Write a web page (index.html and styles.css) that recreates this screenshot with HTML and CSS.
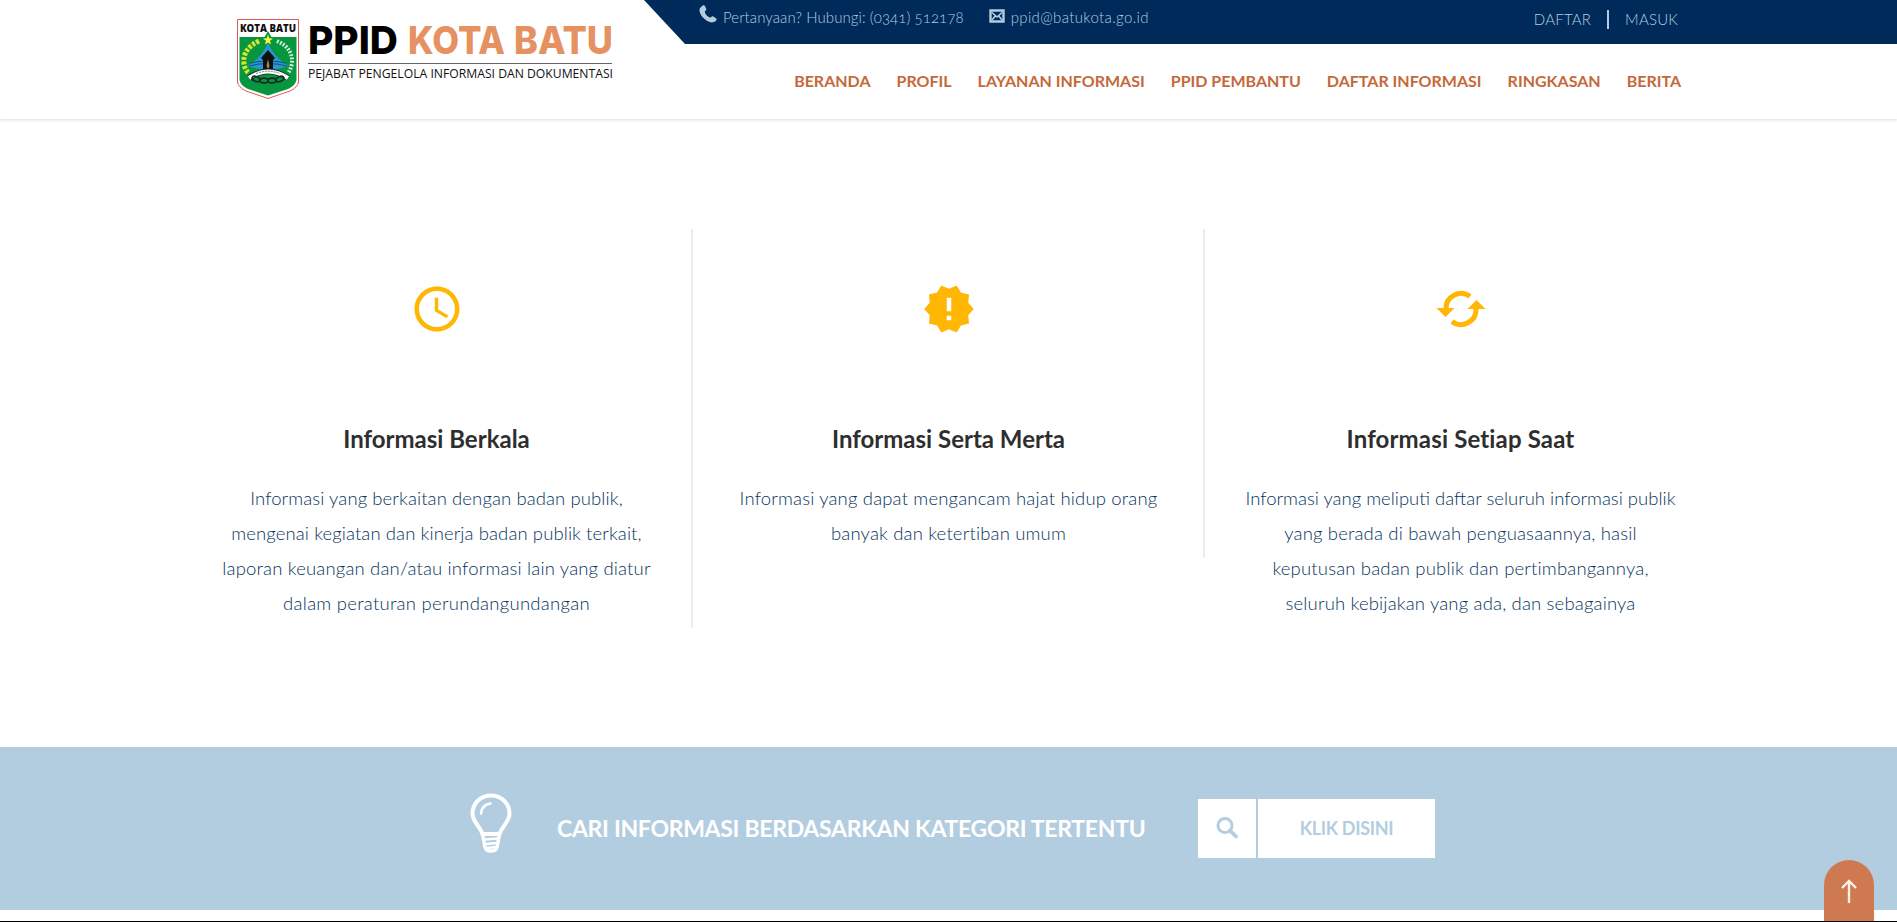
FILE: index.html
```
<!DOCTYPE html>
<html lang="id">
<head>
<meta charset="utf-8">
<title>PPID Kota Batu</title>
<link rel="stylesheet" href="styles.css">
</head>
<body>
<header class="header">
  <a class="brand" href="#">
    <svg width="390" height="118" viewBox="0 0 390 118" aria-label="PPID Kota Batu">
      <path d="M17.500 19.500H78.500V82Q78 87 70 91L48 98.500L26 91Q18 87 17.500 82Z" fill="#fff" stroke="#dc5a55" stroke-width="1"/>
      <path d="M19.500 37H76.500V80Q75 86 68 89L48 95.500L28 89Q21 86 19.500 80Z" fill="#05963f"/>
      <text class="crest-text" x="20" y="31.500" textLength="56" lengthAdjust="spacingAndGlyphs">KOTA BATU</text>
      <path d="M48 43C52 52 59 61 69 66Q48 73 27 66C37 61 44 52 48 43Z" fill="#2b94d2"/>
      <path d="M30 63Q48 59 66 63M29 66Q48 61 67 66" fill="none" stroke="#0a5b70" stroke-width="1"/>
      <path d="M48 50L55 58L53 60V71H43V60L41 58Z" fill="#101010"/>
      <path d="M48 59L49.500 66L48 69L46.500 66Z" fill="#a9854b"/>
      <path d="M48 31L44 38H52Z" fill="#05963f"/>
      <path d="M48 34.500L49.300 38.300L53 38.500L50 40.800L51 44.500L48 42.400L45 44.500L46 40.800L43 38.500L46.700 38.300Z" fill="#fff23a"/>
      <path d="M39 41Q22 49 24 64Q25 70 29 73" fill="none" stroke="#d7e52e" stroke-width="5" stroke-dasharray="3 1.500"/>
      <path d="M57 41Q73 48 72 63Q71 69 68 73" fill="none" stroke="#d9f0de" stroke-width="4" stroke-dasharray="1.800 1.500"/>
      <path d="M29 78Q48 65 68 78" fill="none" stroke="#163e36" stroke-width="6"/>
      <path d="M29 78Q48 65 68 78" fill="none" stroke="#fff" stroke-width="4"/>
      <path d="M36 73.500Q48 69 60 73.500" fill="none" stroke="#777" stroke-width="1" stroke-dasharray="2 1"/>
      <g fill="none" stroke="#142c24" stroke-width="1.700"><ellipse cx="36" cy="79" rx="4" ry="2.400" transform="rotate(20 36 79)"/><ellipse cx="44" cy="80.500" rx="4" ry="2.400"/><ellipse cx="52" cy="80.500" rx="4" ry="2.400"/><ellipse cx="60" cy="79" rx="4" ry="2.400" transform="rotate(-20 60 79)"/></g>
      <text class="logo-text" x="88" y="54" textLength="90" lengthAdjust="spacingAndGlyphs">PPID</text>
      <text class="logo-text logo-accent" x="188" y="54" textLength="97" lengthAdjust="spacingAndGlyphs">KOTA</text>
      <text class="logo-text logo-accent" x="294" y="54" textLength="99" lengthAdjust="spacingAndGlyphs">BATU</text>
      <path d="M88 63.500H392" stroke="#666"/>
      <text class="logo-sub" x="88" y="78" textLength="305" lengthAdjust="spacingAndGlyphs">PEJABAT PENGELOLA INFORMASI DAN DOKUMENTASI</text>
    </svg>
  </a>
  <div class="header-main">
    <div class="topbar">
      <div class="contacts">
        <svg class="phone" width="18" height="18" viewBox="0 0 18 18"><path d="M1 3L4 .3Q5.300 0 6 1L7.300 4.200Q7.500 5.300 5.800 6.300Q6 10.500 11.300 12.700Q12.800 10.800 14 11.300L17.300 13.600Q18 15 16.500 16.300Q13 18.700 8.300 16Q2.500 12.500 .7 7Q.2 4.500 1 3Z" fill="currentColor"/></svg>
        <span class="c-phone">Pertanyaan? Hubungi: (0341) 512178</span>
        <svg class="mail" width="16" height="14" viewBox="0 0 16 14"><path d="M1.500 1.500H14.500V12.500H1.500Z" fill="none" stroke="currentColor" stroke-width="2.400"/><path d="M3 3.500L8 8L13 3.500M3 11L6.200 7M13 11L9.800 7" fill="none" stroke="currentColor" stroke-width="1.600"/></svg>
        <span class="c-mail">ppid@batukota.go.id</span>
      </div>
      <div class="account"><a>DAFTAR</a><i class="bar"></i><a>MASUK</a></div>
    </div>
    <nav class="nav"><a>BERANDA</a><a>PROFIL</a><a>LAYANAN INFORMASI</a><a>PPID PEMBANTU</a><a>DAFTAR INFORMASI</a><a>RINGKASAN</a><a>BERITA</a></nav>
  </div>
</header>
<main>
  <section class="features">
    <article class="feature">
      <svg width="54" height="54" viewBox="0 0 24 24"><path fill="currentColor" d="M11.990 2C6.470 2 2 6.480 2 12s4.470 10 9.990 10C17.520 22 22 17.520 22 12S17.520 2 11.990 2zM12 20c-4.420 0-8-3.580-8-8s3.580-8 8-8 8 3.580 8 8-3.580 8-8 8zM12.500 7H11v6l5.250 3.150.75-1.230-4.500-2.670z"/></svg>
      <h3>Informasi Berkala</h3>
      <p><span class="snug">Informasi yang berkaitan dengan badan publik,</span><br><span class="snug">mengenai kegiatan dan kinerja badan publik terkait,</span><br><span class="mid">laporan keuangan dan/atau informasi lain yang diatur</span><br><span class="loose">dalam peraturan perundangundangan</span></p>
    </article>
    <article class="feature">
      <svg width="54" height="54" viewBox="0 0 24 24"><path fill="currentColor" d="M23 12l-2.440-2.780.34-3.680-3.610-.82-1.890-3.180L12 3 8.600 1.540 6.710 4.720l-3.610.81.34 3.680L1 12l2.440 2.780-.34 3.690 3.610.82 1.890 3.180L12 21l3.400 1.460 1.890-3.180 3.610-.82-.34-3.680L23 12zm-10 5h-2v-2h2v2zm0-4h-2V7h2v6z"/></svg>
      <h3>Informasi Serta Merta</h3>
      <p><span class="mid">Informasi yang dapat mengancam hajat hidup orang</span><br><span class="mid">banyak dan ketertiban umum</span></p>
    </article>
    <article class="feature">
      <svg width="54" height="54" viewBox="0 0 54 54"><g fill="none" stroke="currentColor" stroke-width="5"><path d="M36 14.500A15 15 0 0 0 12 27"/><path d="M18 39.500A15 15 0 0 0 42 27"/></g><path d="M2.500 26H20.500L11.500 35ZM33.500 27H51.500L42.500 18Z" fill="currentColor"/></svg>
      <h3 class="wide">Informasi Setiap Saat</h3>
      <p><span>Informasi yang meliputi daftar seluruh informasi publik</span><br><span class="mid">yang berada di bawah penguasaannya, hasil</span><br><span class="mid">keputusan badan publik dan pertimbangannya,</span><br><span class="mid">seluruh kebijakan yang ada, dan sebagainya</span></p>
    </article>
  </section>
  <section class="cta">
    <svg class="bulb" width="42" height="60" viewBox="0 0 42 60"><g fill="none" stroke="#fff" stroke-linecap="round"><path d="M21 2.500C10.500 2.500 2.500 10.500 2.500 20.500C2.500 29 10 33 12.500 41H29.500C32 33 39.500 29 39.500 20.500C39.500 10.500 31.500 2.500 21 2.500Z" stroke-width="4"/><path d="M11 20.500Q11.500 12 20.500 10.500" stroke-width="2.500"/><path d="M12.500 41L15 54Q16 58 21 58Q26 58 27 54L29.500 41" stroke-width="3.500"/><path d="M15 46.500L27.500 45.500M16 51L26.500 50M17 55L25.500 54" stroke-width="2.500"/></g></svg>
    <h2>CARI INFORMASI BERDASARKAN KATEGORI TERTENTU</h2>
    <a class="search"><svg width="24" height="24" viewBox="0 0 24 24"><circle cx="10" cy="9.500" r="7" fill="none" stroke="currentColor" stroke-width="3"/><path d="M15 14.500L21 20.500" stroke="currentColor" stroke-width="3.800" stroke-linecap="round"/></svg></a>
    <a class="button"><span>KLIK DISINI</span></a>
  </section>
</main>
<a class="to-top" href="#"><svg width="16" height="25" viewBox="0 0 16 25"><path d="M8 24V2M1 9L8 2L15 9" fill="none" stroke="#fff0e8" stroke-width="2.400"/></svg></a>
</body>
</html>
```
FILE: styles.css
```
* { box-sizing: border-box; }
body { margin: 0; height: 922px; overflow: hidden; position: relative; background: #fff; font-family: Lato, "Open Sans", sans-serif; border-bottom: 1px solid #000; }
a { text-decoration: none; color: inherit; }
.header { height: 119px; display: flex; padding-left: 220px; background: #fff; box-shadow: 0 1px 3px rgba(0,0,0,.14); position: relative; }
.brand { width: 424px; flex: none; }
.brand svg { display: block; overflow: visible; }
.crest-text { font: 900 11px "Open Sans", sans-serif; fill: #111; }
.logo-text { font: 800 38.5px Inter, sans-serif; fill: #000; }
.logo-accent { fill: #e59162; }
.logo-sub { font: 400 13px "Open Sans", sans-serif; fill: #111; }
.header-main { flex: 1; }
.topbar { height: 44px; background: #002a5a; color: #b3cde0; clip-path: polygon(0 0, 100% 0, 100% 100%, 41px 100%); display: flex; justify-content: space-between; padding: 0 219px 0 55px; font-size: 15px; font-weight: 300; font-feature-settings: "onum"; }
.contacts { display: flex; height: 33px; align-items: center; }
.c-phone { letter-spacing: .08px; }
.c-mail { letter-spacing: .37px; }
.phone { margin: -5px 6px 0 0; }
.mail { margin: -1px 6px 0 25px; }
.account { display: flex; height: 37px; align-items: center; letter-spacing: .2px; }
.bar { width: 2px; height: 19px; margin: 2px 16px 0; background: #b3cde0; }
.nav { height: 73px; display: flex; align-items: center; justify-content: flex-end; gap: 26px; padding: 0 216px 0 0; color: #c4693b; font-size: 16px; font-weight: 700; }
.features { display: grid; grid-template-columns: repeat(3, 512px); justify-content: center; align-items: start; height: 628px; padding-top: 110px; }
.feature { text-align: center; padding: 53px 0 0 2px; color: #ffb703; border-right: 2px solid #ededed; }
.feature:last-child { border: 0; padding-left: 0; }
.feature svg { display: block; margin: 0 auto; }
.feature h3 { margin: 88px 0 0; font-size: 24px; line-height: 30px; font-weight: 700; color: #2e2e2e; }
.feature .wide { letter-spacing: .15px; }
.feature p { margin: 27px 0 0; padding-bottom: 7px; font-size: 18.5px; line-height: 35px; font-weight: 300; color: #07335c; white-space: nowrap; }
.snug { letter-spacing: .1px; }
.mid { letter-spacing: .17px; }
.loose { letter-spacing: .27px; }
.cta { height: 163px; background: #b3cde0; display: flex; align-items: flex-start; padding: 46px 0 0 470px; color: #fff; }
.cta h2 { margin: 20px 0 0 45px; width: 596px; font-size: 23px; line-height: 30px; font-weight: 700; letter-spacing: -.3px; white-space: nowrap; }
.search, .button { height: 59px; margin-top: 6px; background: #fff; color: #b3cde0; display: flex; align-items: center; justify-content: center; }
.search { width: 58px; margin-left: 45px; padding-bottom: 2px; }
.button { width: 177px; margin-left: 2px; padding-bottom: 2px; font-size: 18px; font-weight: 700; letter-spacing: -.35px; }
.to-top { position: absolute; left: 1824px; top: 860px; width: 50px; height: 61px; border-radius: 25px 25px 0 0; background: #cf7950; display: flex; justify-content: center; padding-top: 19px; }
```
